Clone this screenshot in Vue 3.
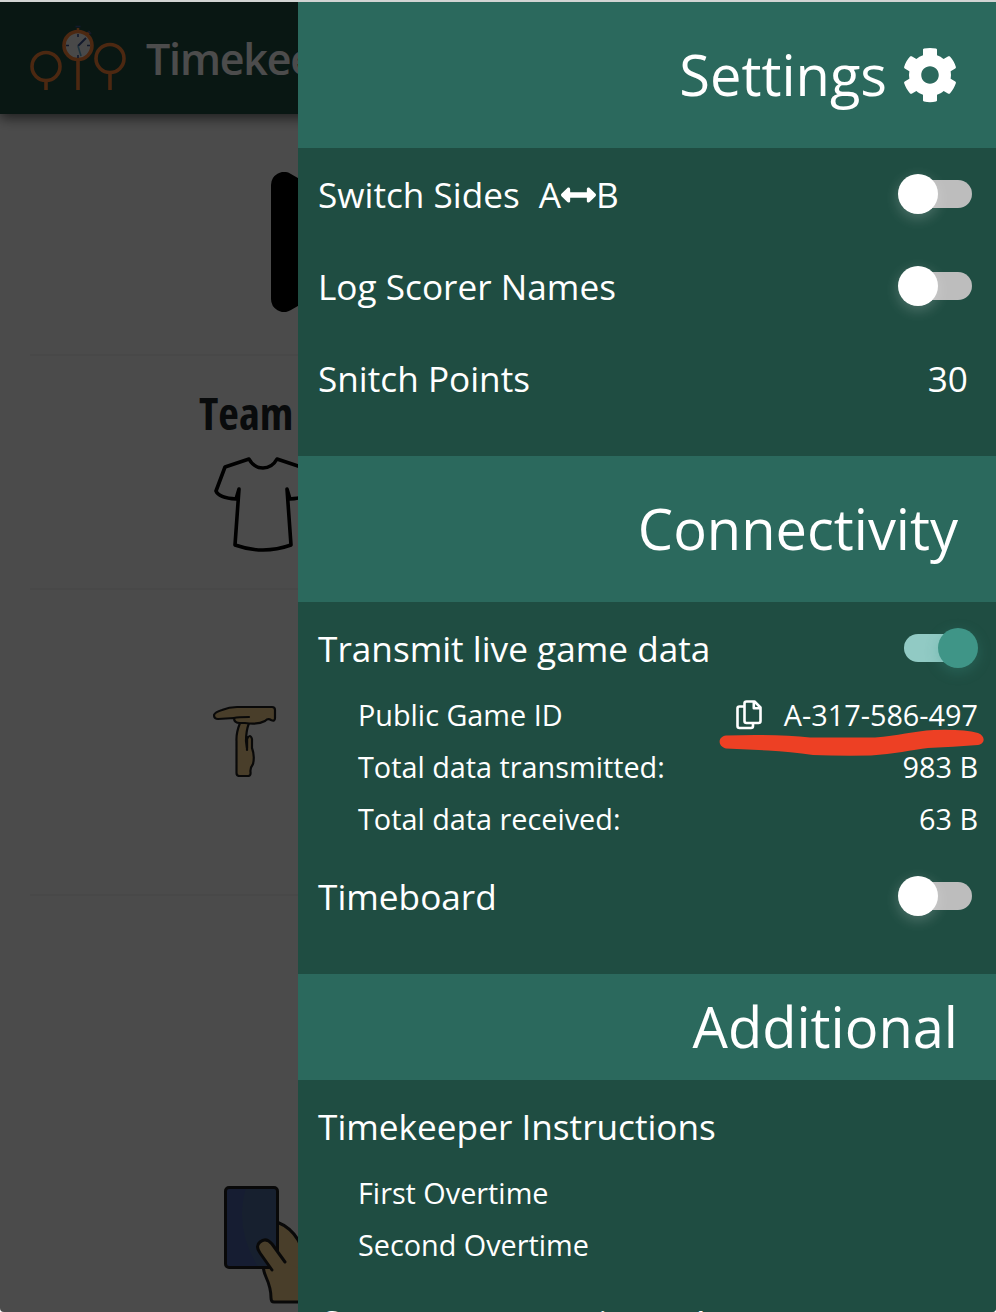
<script setup>
import { ref } from 'vue'

const settings = ref({ switchSides: false, logNames: false, snitchPoints: 30 })
const connectivity = ref({ transmit: true, timeboard: false })
const stats = [
  { label: 'Total data transmitted:', value: '983 B' },
  { label: 'Total data received:', value: '63 B' },
]
const instructions = ['First Overtime', 'Second Overtime']
</script>

<template>
  <div class="screen">
    <div class="page">
      <header class="topbar">
        <svg class="logo" width="98" height="66" viewBox="0 0 98 66">
          <g fill="none" stroke="#fd8539" stroke-width="3.6">
            <circle cx="16" cy="41.500" r="14" />
            <path d="M16 56v9M48 35v30M80 48v17" />
            <circle cx="48" cy="20.500" r="14" fill="#f4f4f4" />
            <circle cx="80" cy="33.500" r="14" />
            <path d="M48 7V3M57 9l3-2" stroke-width="2.5" />
          </g>
          <g fill="none" stroke="#3c5490" stroke-width="1.6">
            <path d="M45.500 1.500h5M58 6l3 3M48 9v3M48 30v3M36 20.500h3M57 20.500h3" />
            <path d="M48 21l8-8" stroke-width="2" />
            <path d="M48 21l3 10" stroke="#63a7ca" />
          </g>
        </svg>
        <span class="brand">Timekeeper</span>
      </header>
      <section class="block play">
        <svg width="110" height="140" viewBox="0 0 110 140">
          <path d="M0 13A13 13 0 0 1 19.500 1.700L98 47q12 23 0 46L19.500 138.300A13 13 0 0 1 0 127z" fill="#000" />
        </svg>
      </section>
      <section class="block team">
        <div class="team-name">Team A</div>
        <svg class="shirt" width="100" height="96" viewBox="0 0 100 96">
          <path d="M35 2L11 10L2 34Q5 41 22 42L25 32L21 88Q49 98 77 88L73 32L76 42Q93 41 96 34L87 10L63 2Q58 11 49 11Q40 11 35 2Z" fill="none" stroke="#000" stroke-width="3.600" stroke-linejoin="round" stroke-linecap="round" />
        </svg>
      </section>
      <section class="block timeout">
        <svg width="64" height="72" viewBox="0 0 64 72">
          <g fill="#f3cf8c" stroke="#202020" stroke-width="2.200" stroke-linejoin="round" stroke-linecap="round">
            <path d="M27 18Q23 28 23.500 36V68q0 3 3 3H35q3 0 2.500-4Q37 63 40 59Q42 51 39 43V34q-2-6-5 0V43L33 36Q33 26 36 18Z" />
            <path d="M34 32V45" fill="none" />
            <path d="M24 2H59q3 0 3 3V13q0 4-4 2Q55 13 52 16Q45 20 32 18H27Q21 18 21 13L5 14Q1 14 1 10Q2 7 9 5Q16 2 24 2Z" />
            <path d="M21 13Q25 12 36 12" fill="none" />
          </g>
        </svg>
      </section>
      <section class="block cards">
        <svg width="100" height="118" viewBox="0 0 100 118">
          <path d="M53 36Q83 48 82 92L78 113q0 3-3 3H50q-3 0-3-4Q47 102 42 91Q38 82 38 70Z" fill="#f3cf8c" stroke="#202020" stroke-width="3" />
          <rect x="1.500" y="1.500" width="52" height="80" rx="3.500" fill="#4a62a8" />
          <path d="M22 2H50q4 0 4 4V78q0 3-3 3H34Q10 42 22 2Z" fill="#4e6c9e" />
          <rect x="1.500" y="1.500" width="52" height="80" rx="3.500" fill="none" stroke="#202020" stroke-width="3" />
          <path d="M61 76L48 58Q42 51 36 56Q31 60 36 67L48 84L62 98L74 82Z" fill="#f3cf8c" />
          <path d="M61 76L48 58Q42 51 36 56Q31 60 36 67L48 84" fill="none" stroke="#202020" stroke-width="3" stroke-linecap="round" stroke-linejoin="round" />
        </svg>
      </section>
    </div>
    <div class="backdrop"></div>

    <aside class="drawer">
      <h2 class="head">
        <span>Settings</span>
        <svg class="gear" width="56" height="56" viewBox="0 0 512 512"><path fill="#fff" d="M487.4 315.7l-42.6-24.6c4.3-23.2 4.3-47 0-70.2l42.6-24.6c4.9-2.8 7.1-8.600 5.500-14-11.100-35.600-30-67.800-54.700-94.600-3.800-4.100-10-5.100-14.800-2.300L380.800 110c-17.900-15.400-38.500-27.300-60.800-35.100V25.800c0-5.600-3.900-10.500-9.400-11.700-36.700-8.200-74.300-7.800-109.200 0-5.500 1.200-9.400 6.100-9.400 11.700V75c-22.200 7.900-42.800 19.800-60.800 35.100L88.700 85.500c-4.900-2.800-11-1.900-14.800 2.300-24.700 26.700-43.600 58.900-54.700 94.600-1.700 5.400.6 11.200 5.500 14L67.300 221c-4.300 23.200-4.300 47 0 70.200l-42.600 24.600c-4.900 2.800-7.100 8.600-5.500 14 11.100 35.600 30 67.800 54.700 94.600 3.800 4.100 10 5.100 14.800 2.300l42.600-24.600c17.900 15.400 38.500 27.300 60.800 35.100v49.200c0 5.600 3.900 10.500 9.400 11.700 36.700 8.200 74.300 7.800 109.200 0 5.500-1.200 9.400-6.100 9.400-11.700v-49.200c22.200-7.900 42.800-19.800 60.800-35.100l42.600 24.600c4.900 2.800 11 1.900 14.800-2.300 24.700-26.700 43.600-58.900 54.700-94.600 1.500-5.500-.7-11.300-5.600-14.100zM256 336c-44.100 0-80-35.900-80-80s35.900-80 80-80 80 35.900 80 80-35.900 80-80 80z" /></svg>
      </h2>
      <div class="body first">
        <div class="row">
          <span class="label">Switch Sides</span>
          <span class="swap"><span class="label">A</span><svg width="35" height="36" viewBox="0 0 512 512"><path fill="#fff" d="M377.941 169.941V216H134.059v-46.059c0-21.382-25.851-32.090-40.971-16.971L7.029 239.029c-9.373 9.373-9.373 24.568 0 33.941l86.059 86.059c15.119 15.119 40.971 4.411 40.971-16.971V296h243.882v46.059c0 21.382 25.851 32.090 40.971 16.971l86.059-86.059c9.373-9.373 9.373-24.568 0-33.941l-86.059-86.059c-15.119-15.120-40.971-4.411-40.971 16.970z" /></svg><span class="label">B</span></span>
          <span class="toggle" :class="{ on: settings.switchSides }"><i></i></span>
        </div>
        <div class="row">
          <span class="label">Log Scorer Names</span>
          <span class="toggle" :class="{ on: settings.logNames }"><i></i></span>
        </div>
        <div class="row">
          <span class="label">Snitch Points</span>
          <span class="label number">{{ settings.snitchPoints }}</span>
        </div>
      </div>

      <h2 class="head"><span>Connectivity</span></h2>
      <div class="body second">
        <div class="row">
          <span class="label">Transmit live game data</span>
          <span class="toggle" :class="{ on: connectivity.transmit }"><i></i></span>
        </div>
        <div class="subs">
          <div class="sub">
            <span>Public Game ID</span>
            <div class="game-id">
              <svg width="26" height="30" viewBox="0 0 26 30" fill="none" stroke="#fff" stroke-width="2.600" stroke-linejoin="round">
                <path d="M10.500 1.500H18.500L24.500 7.500V21q0 2-2 2H10.500q-2 0-2-2V3.500q0-2 2-2Z" />
                <path d="M17.800 2V8.200H24" />
                <path d="M8.500 6.500H3.500q-2 0-2 2V26q0 2 2 2H15q2 0 2-2V23" />
              </svg>
              <span>A-317-586-497</span>
            </div>
            <svg class="marker" width="268" height="30" viewBox="0 0 268 30">
              <path d="M8 6.500Q60 5 92 8.500H157C180 7 195 2 216 1Q245 0 260 4C268 7 267 15 260 16Q235 18 210 19C195 21 175 25 153 26.500Q120 27 95 26C80 24 65 22 50 21.500L8 19.500C-1 17 0 7.500 8 6.500Z" fill="#ed4024" />
            </svg>
          </div>
          <div v-for="s in stats" :key="s.label" class="sub">
            <span>{{ s.label }}</span><span>{{ s.value }}</span>
          </div>
        </div>
        <div class="row">
          <span class="label">Timeboard</span>
          <span class="toggle" :class="{ on: connectivity.timeboard }"><i></i></span>
        </div>
      </div>

      <h2 class="head short"><span>Additional</span></h2>
      <div class="body third">
        <div class="row"><span class="label">Timekeeper Instructions</span></div>
        <div class="subs">
          <div v-for="name in instructions" :key="name" class="sub"><span>{{ name }}</span></div>
        </div>
        <div class="row"><span class="label version">Current app versions: 4</span></div>
      </div>
    </aside>
  </div>
</template>

<style>
html, body { background: #fff; overflow: hidden; }
</style>

<style scoped>
* { box-sizing: border-box; }
svg { display: block; flex: none; }
.screen {
  position: relative;
  width: 996px;
  height: 1312px;
  overflow: hidden;
  border-top: 2px solid #d2d4d3;
  border-radius: 0 0 4px 4px;
  font-family: "Open Sans", "Noto Sans", sans-serif;
}
.page { height: 1310px; background: #fcfcfc; overflow: hidden; }
.topbar {
  position: relative;
  height: 112px;
  display: flex;
  align-items: center;
  padding-left: 30px;
  background: #1f4d42;
  box-shadow: 0 4px 12px rgba(0, 0, 0, .6);
}
.brand { margin-left: 18px; color: #fff; font-size: 43px; font-weight: 550; letter-spacing: -1.2px; line-height: 60px; padding-top: 2px; }
.block { margin: 0 30px; border-bottom: 2px solid #f0f0f0; }
.play { height: 242px; padding: 58px 0 0 241px; }
.team { height: 234px; padding: 27px 0 0 169px; }
.team-name { font-size: 45px; font-weight: 700; font-stretch: 75%; line-height: 60px; color: #212529; white-space: nowrap; }
.shirt { margin: 14px 0 0 15px; }
.timeout { height: 306px; padding: 115px 0 0 183px; }
.cards { height: 420px; padding: 290px 0 0 194px; border: 0; }
.backdrop { position: absolute; inset: 0; background: rgba(0, 0, 0, .7); }
.drawer {
  position: absolute;
  top: 0;
  right: 0;
  width: 698px;
  height: 1310px;
  overflow: hidden;
  background: #1f4d42;
  color: #fff;
}
.head {
  height: 146px;
  margin: 0;
  padding-right: 38px;
  display: flex;
  align-items: center;
  justify-content: flex-end;
  background: #2b695d;
  font-size: 56px;
  font-weight: 400;
  line-height: 76px;
}
.head span { padding-bottom: 2px; }
.head.short { height: 106px; }
.gear { margin-left: 15px; }
.body { padding-top: 1px; }
.first { height: 308px; }
.second { height: 372px; }
.row {
  height: 92px;
  padding: 0 24px 0 20px;
  display: flex;
  align-items: center;
  font-size: 35.2px;
  line-height: 48px;
  white-space: nowrap;
}
.label { padding-bottom: 3px; }
.swap { display: flex; align-items: center; margin-left: 19px; }
.swap svg { margin-top: -1px; }
.number { margin-left: auto; padding-right: 4px; }
.version { letter-spacing: .28px; }
.toggle {
  display: flex;
  align-items: center;
  width: 68px;
  height: 28px;
  margin: -2px 0 0 auto;
  border-radius: 14px;
  background: #bdbdbd;
}
.toggle i {
  flex: none;
  width: 40px;
  height: 40px;
  margin-left: -6px;
  border-radius: 50%;
  background: #fff;
  box-shadow: 0 4px 14px rgba(255, 255, 255, .22);
}
.toggle.on { background: #91cac4; }
.toggle.on i { margin-left: 34px; background: #3f9587; box-shadow: 0 4px 14px rgba(63, 149, 135, .3); }
.subs { margin: -6px 0 6px; }
.sub {
  position: relative;
  height: 52px;
  padding: 0 18px 0 60px;
  display: flex;
  align-items: center;
  justify-content: space-between;
  font-size: 28.8px;
  line-height: 40px;
}
.game-id { display: flex; align-items: center; gap: 22px; }
.marker { position: absolute; left: 420px; top: 40px; z-index: 1; }
</style>
